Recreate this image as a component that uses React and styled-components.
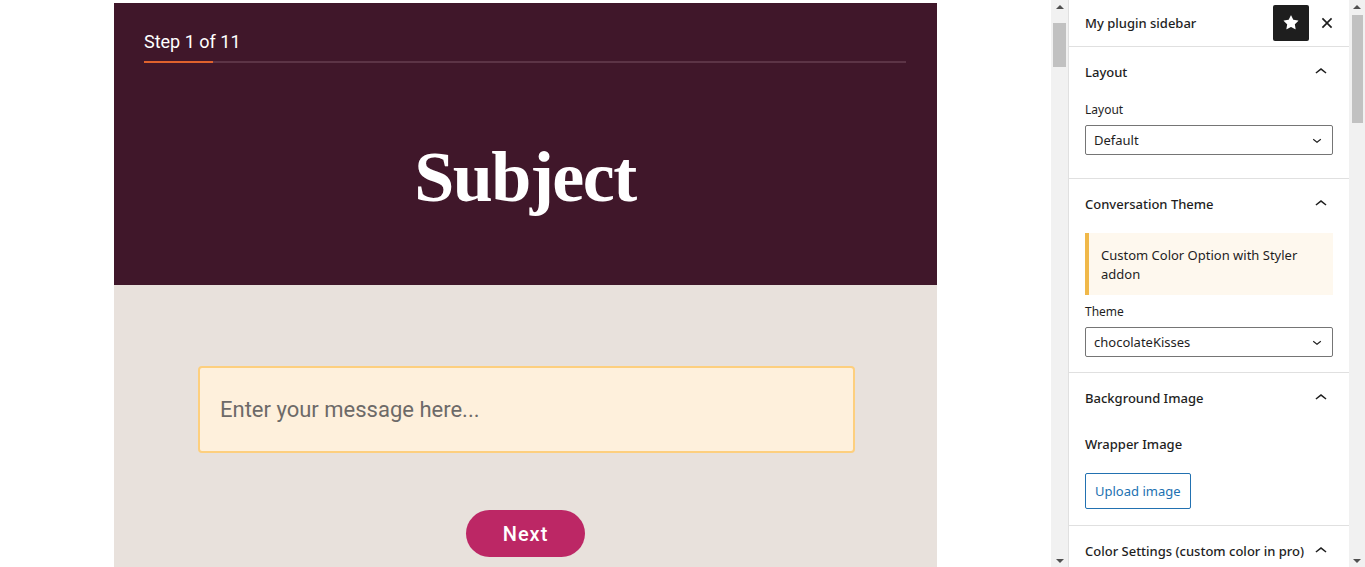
import styled, { createGlobalStyle } from 'styled-components';

const GlobalStyle = createGlobalStyle`
  html, body {
    margin: 0;
    padding: 0;
    overflow: hidden;
    background: #fff;
  }
  * {
    box-sizing: border-box;
  }
`;

const Page = styled.div`
  display: flex;
  width: 1365px;
  height: 567px;
  overflow: hidden;
`;

const Editor = styled.div`
  flex: 1;
  display: flex;
  justify-content: center;
  padding-top: 3px;
  background: #fff;
`;

const Canvas = styled.div`
  width: 823px;
  display: flex;
  flex-direction: column;
  font-family: Roboto, 'Liberation Sans', sans-serif;
`;

const Header = styled.div`
  height: 282px;
  background: #40172a;
  padding: 29px 31px 0 30px;
  display: flex;
  flex-direction: column;
`;

const StepText = styled.div`
  color: #fff;
  font-size: 18px;
  line-height: 20px;
`;

const Progress = styled.div`
  margin-top: 9px;
  height: 2px;
  background: #5c3446;
`;

const ProgressFill = styled.div`
  height: 100%;
  background: #e0622d;
`;

const TitleArea = styled.div`
  flex: 1;
  display: flex;
  align-items: center;
  justify-content: center;
  padding-top: 5px;
`;

const Title = styled.h1`
  margin: 0;
  color: #fff;
  font-family: 'Liberation Serif', 'DejaVu Serif', serif;
  font-weight: 700;
  font-size: 72px;
  line-height: 1;
  letter-spacing: -1.5px;
`;

const Body = styled.div`
  flex: 1;
  background: #e8e1dc;
  display: flex;
  flex-direction: column;
  align-items: center;
  padding-top: 81px;
`;

const MessageBox = styled.div`
  width: 657px;
  height: 87px;
  margin-left: 2px;
  border: 2px solid #fdcf7e;
  border-radius: 4px;
  background: #fef0dc;
  display: flex;
  align-items: center;
  padding-left: 20px;
  color: #6d6a68;
  font-size: 22px;
`;

const NextButton = styled.button`
  margin-top: 57px;
  width: 119px;
  height: 47px;
  border: none;
  border-radius: 24px;
  background: #bc2765;
  color: #fff;
  font-family: Roboto, 'Liberation Sans', sans-serif;
  font-size: 20px;
  font-weight: 500;
  letter-spacing: 1px;
  padding: 0;
`;

const Track = styled.div`
  width: ${(p) => p.$width}px;
  height: 567px;
  background: #f1f1f1;
  display: flex;
  flex-direction: column;
  align-items: center;
  flex-shrink: 0;
`;

const Arrow = styled.div`
  width: 0;
  height: 0;
  margin-top: ${(p) => (p.$down ? 'auto' : '5px')};
  margin-bottom: ${(p) => (p.$down ? '4px' : '0')};
  border-left: 4px solid transparent;
  border-right: 4px solid transparent;
  ${(p) => (p.$down ? 'border-top: 4px solid #505050;' : 'border-bottom: 4px solid #505050;')}
`;

const Thumb = styled.div`
  width: ${(p) => p.$width}px;
  height: ${(p) => p.$height}px;
  margin-top: ${(p) => p.$top}px;
  background: #c1c1c1;
`;

const Sidebar = styled.div`
  width: 281px;
  flex-shrink: 0;
  border-left: 1px solid #e0e0e0;
  background: #fff;
  font-family: 'Noto Sans', 'Liberation Sans', sans-serif;
  color: #1e1e1e;
  font-size: 13px;
`;

const SidebarHeader = styled.div`
  height: 47px;
  border-bottom: 1px solid #e0e0e0;
  display: flex;
  align-items: center;
  padding: 0 4px 0 16px;
`;

const SidebarTitle = styled.div`
  flex: 1;
  font-weight: 500;
`;

const IconButton = styled.button`
  width: 36px;
  height: 36px;
  border: none;
  border-radius: 2px;
  padding: 0;
  display: flex;
  align-items: center;
  justify-content: center;
  background: ${(p) => (p.$active ? '#1e1e1e' : 'transparent')};
  color: ${(p) => (p.$active ? '#fff' : '#1e1e1e')};
`;

const Panel = styled.div`
  border-bottom: 1px solid #e0e0e0;
  padding: 0 16px ${(p) => p.$bottom}px;
`;

const PanelHead = styled.div`
  height: 50px;
  display: flex;
  align-items: center;
  justify-content: space-between;
  font-weight: 500;
`;

const Label = styled.div`
  line-height: 16px;
  margin-top: ${(p) => p.$top}px;
  margin-bottom: ${(p) => p.$bottom}px;
  font-weight: ${(p) => (p.$strong ? 500 : 400)};
  font-size: ${(p) => (p.$strong ? 13 : 12)}px;
`;

const Select = styled.div`
  height: 30px;
  border: 1px solid #757575;
  border-radius: 2px;
  display: flex;
  align-items: center;
  justify-content: space-between;
  padding: 0 6px 0 8px;
`;

const Notice = styled.div`
  margin-top: 4px;
  background: #fef8ee;
  border-left: 4px solid #f0b849;
  padding: 13px 12px 11px 12px;
  line-height: 19px;
`;

const UploadButton = styled.button`
  height: 36px;
  padding: 0 9px;
  border: 1px solid #2271b1;
  border-radius: 2px;
  background: #fff;
  color: #2271b1;
  font-family: 'Noto Sans', 'Liberation Sans', sans-serif;
  font-size: 13px;
`;

const ChevronUp = () => (
  <svg width="24" height="24" viewBox="0 0 24 24" fill="currentColor">
    <path d="M6.5 12.4L12 8l5.5 4.4-.9 1.2L12 10l-4.6 3.6-1-1.2z" />
  </svg>
);

const ChevronDown = () => (
  <svg width="18" height="18" viewBox="0 0 24 24" fill="currentColor">
    <path d="M17.5 11.6L12 16l-5.5-4.4.9-1.2L12 14l4.6-3.6 1 1.2z" />
  </svg>
);

const Star = () => (
  <svg width="24" height="24" viewBox="0 0 24 24" fill="currentColor">
    <path d="M11.776 4.454a.25.25 0 01.448 0l2.069 4.192a.25.25 0 00.188.137l4.626.672a.25.25 0 01.139.426l-3.348 3.263a.25.25 0 00-.072.222l.79 4.607a.25.25 0 01-.362.263l-4.138-2.175a.25.25 0 00-.232 0l-4.138 2.175a.25.25 0 01-.363-.263l.79-4.607a.25.25 0 00-.071-.222L4.754 9.881a.25.25 0 01.139-.426l4.626-.672a.25.25 0 00.188-.137l2.069-4.192z" />
  </svg>
);

const Close = () => (
  <svg width="26" height="26" viewBox="0 0 24 24" fill="currentColor">
    <path d="M12 13.06l3.712 3.713 1.061-1.06L13.061 12l3.712-3.712-1.06-1.06L12 10.938 8.288 7.227l-1.061 1.06L10.939 12l-3.712 3.712 1.06 1.061L12 13.061z" />
  </svg>
);

const Scrollbar = ({ width, thumbTop, thumbHeight, thumbWidth }) => (
  <Track $width={width}>
    <Arrow />
    <Thumb $top={thumbTop} $height={thumbHeight} $width={thumbWidth} />
    <Arrow $down />
  </Track>
);

const PanelTitle = ({ children }) => (
  <PanelHead>
    <span>{children}</span>
    <ChevronUp />
  </PanelHead>
);

export default function App() {
  const step = 1;
  const total = 11;

  return (
    <>
      <GlobalStyle />
      <Page>
        <Editor>
          <Canvas>
            <Header>
              <StepText>
                Step {step} of {total}
              </StepText>
              <Progress>
                <ProgressFill style={{ width: `${(step / total) * 100}%` }} />
              </Progress>
              <TitleArea>
                <Title>Subject</Title>
              </TitleArea>
            </Header>
            <Body>
              <MessageBox>Enter your message here...</MessageBox>
              <NextButton>Next</NextButton>
            </Body>
          </Canvas>
        </Editor>
        <Scrollbar width={17} thumbTop={14} thumbHeight={44} thumbWidth={13} />
        <Sidebar>
          <SidebarHeader>
            <SidebarTitle>My plugin sidebar</SidebarTitle>
            <IconButton $active>
              <Star />
            </IconButton>
            <IconButton>
              <Close />
            </IconButton>
          </SidebarHeader>

          <Panel $bottom={23}>
            <PanelTitle>Layout</PanelTitle>
            <Label $top={5} $bottom={7}>
              Layout
            </Label>
            <Select>
              <span>Default</span>
              <ChevronDown />
            </Select>
          </Panel>

          <Panel $bottom={15}>
            <PanelTitle>Conversation Theme</PanelTitle>
            <Notice>Custom Color Option with Styler addon</Notice>
            <Label $top={9} $bottom={7}>
              Theme
            </Label>
            <Select>
              <span>chocolateKisses</span>
              <ChevronDown />
            </Select>
          </Panel>

          <Panel $bottom={16}>
            <PanelTitle>Background Image</PanelTitle>
            <Label $strong $top={13} $bottom={21}>
              Wrapper Image
            </Label>
            <UploadButton>Upload image</UploadButton>
          </Panel>

          <Panel $bottom={16}>
            <PanelTitle>Color Settings (custom color in pro)</PanelTitle>
          </Panel>
        </Sidebar>
        <Scrollbar width={16} thumbTop={6} thumbHeight={108} thumbWidth={11} />
      </Page>
    </>
  );
}
